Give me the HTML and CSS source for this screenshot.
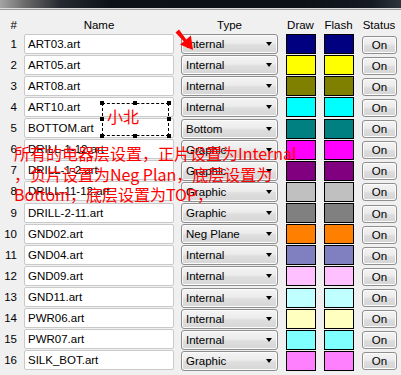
FILE: index.html
```html
<!DOCTYPE html>
<html>
<head>
<meta charset="utf-8">
<link rel="stylesheet" href="styles.css">
</head>
<body>
<div class="window">
  <div class="titlebar"></div>
  <div class="table">
    <div class="hdr num">#</div><div class="hdr">Name</div><div class="hdr">Type</div><div class="hdr">Draw</div><div class="hdr">Flash</div><div class="hdr">Status</div>

    <div class="num">1</div><div class="name">ART03.art</div><div class="type"><span>Internal</span><i class="caret"></i></div><div class="swcell"><div class="sw" style="background:#000080"></div></div><div class="swcell"><div class="sw" style="background:#000080"></div></div><div class="stcell"><div class="btn">On</div></div>
    <div class="num">2</div><div class="name">ART05.art</div><div class="type"><span>Internal</span><i class="caret"></i></div><div class="swcell"><div class="sw" style="background:#ffff00"></div></div><div class="swcell"><div class="sw" style="background:#ffff00"></div></div><div class="stcell"><div class="btn">On</div></div>
    <div class="num">3</div><div class="name">ART08.art</div><div class="type"><span>Internal</span><i class="caret"></i></div><div class="swcell"><div class="sw" style="background:#808000"></div></div><div class="swcell"><div class="sw" style="background:#808000"></div></div><div class="stcell"><div class="btn">On</div></div>
    <div class="num">4</div><div class="name">ART10.art</div><div class="type"><span>Internal</span><i class="caret"></i></div><div class="swcell"><div class="sw" style="background:#00ffff"></div></div><div class="swcell"><div class="sw" style="background:#00ffff"></div></div><div class="stcell"><div class="btn">On</div></div>
    <div class="num">5</div><div class="name">BOTTOM.art</div><div class="type"><span>Bottom</span><i class="caret"></i></div><div class="swcell"><div class="sw" style="background:#008080"></div></div><div class="swcell"><div class="sw" style="background:#008080"></div></div><div class="stcell"><div class="btn">On</div></div>
    <div class="num">6</div><div class="name">DRILL-1-12.art</div><div class="type"><span>Graphic</span><i class="caret"></i></div><div class="swcell"><div class="sw" style="background:#ff00ff"></div></div><div class="swcell"><div class="sw" style="background:#ff00ff"></div></div><div class="stcell"><div class="btn">On</div></div>
    <div class="num">7</div><div class="name">DRILL-1-2.art</div><div class="type"><span>Graphic</span><i class="caret"></i></div><div class="swcell"><div class="sw" style="background:#800080"></div></div><div class="swcell"><div class="sw" style="background:#800080"></div></div><div class="stcell"><div class="btn">On</div></div>
    <div class="num">8</div><div class="name">DRILL-11-12.art</div><div class="type"><span>Graphic</span><i class="caret"></i></div><div class="swcell"><div class="sw" style="background:#c0c0c0"></div></div><div class="swcell"><div class="sw" style="background:#c0c0c0"></div></div><div class="stcell"><div class="btn">On</div></div>
    <div class="num">9</div><div class="name">DRILL-2-11.art</div><div class="type"><span>Graphic</span><i class="caret"></i></div><div class="swcell"><div class="sw" style="background:#808080"></div></div><div class="swcell"><div class="sw" style="background:#808080"></div></div><div class="stcell"><div class="btn">On</div></div>
    <div class="num">10</div><div class="name">GND02.art</div><div class="type"><span>Neg Plane</span><i class="caret"></i></div><div class="swcell"><div class="sw" style="background:#ff8000"></div></div><div class="swcell"><div class="sw" style="background:#ff8000"></div></div><div class="stcell"><div class="btn">On</div></div>
    <div class="num">11</div><div class="name">GND04.art</div><div class="type"><span>Internal</span><i class="caret"></i></div><div class="swcell"><div class="sw" style="background:#8080c0"></div></div><div class="swcell"><div class="sw" style="background:#8080c0"></div></div><div class="stcell"><div class="btn">On</div></div>
    <div class="num">12</div><div class="name">GND09.art</div><div class="type"><span>Internal</span><i class="caret"></i></div><div class="swcell"><div class="sw" style="background:#ffc0ff"></div></div><div class="swcell"><div class="sw" style="background:#ffc0ff"></div></div><div class="stcell"><div class="btn">On</div></div>
    <div class="num">13</div><div class="name">GND11.art</div><div class="type"><span>Internal</span><i class="caret"></i></div><div class="swcell"><div class="sw" style="background:#c0ffff"></div></div><div class="swcell"><div class="sw" style="background:#c0ffff"></div></div><div class="stcell"><div class="btn">On</div></div>
    <div class="num">14</div><div class="name">PWR06.art</div><div class="type"><span>Internal</span><i class="caret"></i></div><div class="swcell"><div class="sw" style="background:#ffffc0"></div></div><div class="swcell"><div class="sw" style="background:#ffffc0"></div></div><div class="stcell"><div class="btn">On</div></div>
    <div class="num">15</div><div class="name">PWR07.art</div><div class="type"><span>Internal</span><i class="caret"></i></div><div class="swcell"><div class="sw" style="background:#80ffff"></div></div><div class="swcell"><div class="sw" style="background:#80ffff"></div></div><div class="stcell"><div class="btn">On</div></div>
    <div class="num">16</div><div class="name">SILK_BOT.art</div><div class="type"><span>Graphic</span><i class="caret"></i></div><div class="swcell"><div class="sw" style="background:#ff80ff"></div></div><div class="swcell"><div class="sw" style="background:#ff80ff"></div></div><div class="stcell"><div class="btn">On</div></div>
  </div>

  <svg class="arrow" width="30" height="30" viewBox="0 0 30 30">
    <path d="M2.5 4.5 L6 1.5 L13.2 11.6 L17.9 7.6 L20 22 L7 16.6 L10.8 13.4 Z" fill="#ff0000"/>
  </svg>

  <div class="selbox">
    <span class="h tl"></span><span class="h tm"></span><span class="h tr"></span>
    <span class="h ml"></span><span class="h mr"></span>
    <span class="h bl"></span><span class="h bm"></span><span class="h br"></span>
  </div>
  <div class="label">小北</div>

  <div class="note">所有的电器层设置，正片设置为Internal<br>，负片设置为Neg Plan，底层设置为<br>Bottom，底层设置为TOP，</div>
</div>
</body>
</html>
```

FILE: styles.css
```css
html, body {
  margin: 0;
  padding: 0;
}
body {
  background: #f0f0f0;
  width: 401px;
  height: 375px;
  overflow: hidden;
  font-family: "Liberation Sans", Arial, sans-serif;
  font-size: 11.5px;
  color: #000;
}
.window {
  position: relative;
  width: 401px;
  height: 375px;
}
.titlebar {
  height: 8px;
  background: linear-gradient(90deg, #a4a4a4 0, #6a6a6a 25px, #262a30 60px, #0d1219 110px, #0c1118 300px, #141a22 370px, #2e343c 401px);
  border-bottom: 1px solid #dadada;
  box-shadow: 0 1px 0 #9c9c9c;
}
.table {
  margin-top: 1px;
  display: grid;
  grid-template-columns: 17px 150px 97px 31px 31px 36px;
  grid-template-rows: 23.5px repeat(16, 21.125px);
  column-gap: 7px;
  align-items: center;
}
.hdr {
  align-self: end;
  text-align: center;
  line-height: 13px;
  padding-bottom: 2px;
}
.num {
  text-align: right;
  line-height: 13px;
}
.hdr.num {
  text-align: right;
}
.name {
  height: 18px;
  line-height: 18px;
  background: #fff;
  border: 1px solid #c9c9c9;
  border-radius: 2px;
  padding-left: 3px;
  white-space: nowrap;
  overflow: hidden;
  margin-top: -1px;
}
.type {
  height: 19px;
  box-sizing: border-box;
  height: 20px;
  border: 1px solid #8e8e8e;
  border-radius: 3px;
  background: linear-gradient(#f4f4f4 0, #ececec 45%, #dedede 55%, #d6d6d6 100%);
  box-shadow: inset 0 0 0 1px #fbfbfb;
  display: flex;
  align-items: center;
  justify-content: space-between;
  padding: 0 4px 0 4px;
  white-space: nowrap;
  overflow: hidden;
}
.caret {
  width: 0;
  height: 0;
  border-left: 3.5px solid transparent;
  border-right: 3.5px solid transparent;
  border-top: 4px solid #000;
  margin-right: 1px;
}
.swcell, .stcell {
  display: flex;
  justify-content: flex-end;
}
.sw {
  width: 30px;
  height: 20px;
  box-sizing: border-box;
  border: 1px solid #000;
}
.btn {
  width: 35px;
  height: 18px;
  box-sizing: border-box;
  border: 1px solid #8f8f8f;
  border-radius: 3px;
  background: linear-gradient(#f4f4f4 0, #ebebeb 45%, #dddddd 55%, #d4d4d4 100%);
  box-shadow: inset 0 0 0 1px #fcfcfc;
  text-align: center;
  line-height: 16px;
  margin-top: 1px;
}
.arrow {
  position: absolute;
  left: 173px;
  top: 28px;
}
.selbox {
  position: absolute;
  left: 102px;
  top: 103px;
  width: 65px;
  height: 31px;
  border: 1px dashed #000;
}
.h {
  position: absolute;
  width: 4px;
  height: 4px;
  background: #000;
}
.tl { left: -3px; top: -3px; }
.tm { left: 30px; top: -3px; }
.tr { right: -3px; top: -3px; }
.ml { left: -3px; top: 13px; }
.mr { right: -3px; top: 13px; }
.bl { left: -3px; bottom: -3px; }
.bm { left: 30px; bottom: -3px; }
.br { right: -3px; bottom: -3px; }
.label {
  position: absolute;
  left: 107px;
  top: 108px;
  font-family: "Noto Sans CJK SC", sans-serif;
  font-size: 16px;
  line-height: 16px;
  color: #ff0000;
}
.note {
  position: absolute;
  left: 14px;
  top: 143px;
  font-family: "Noto Sans CJK SC", sans-serif;
  font-size: 16px;
  line-height: 20.5px;
  color: #ff0000;
  white-space: nowrap;
}
```
